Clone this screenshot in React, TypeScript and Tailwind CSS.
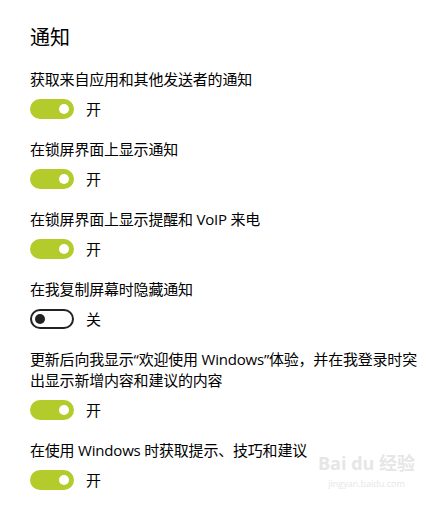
import React from "react";

const items = [
  { label: "获取来自应用和其他发送者的通知", on: true },
  { label: "在锁屏界面上显示通知", on: true },
  { label: "在锁屏界面上显示提醒和 VoIP 来电", on: true },
  { label: "在我复制屏幕时隐藏通知", on: false },
  {
    label: "更新后向我显示“欢迎使用 Windows”体验，并在我登录时突出显示新增内容和建议的内容",
    on: true,
  },
  { label: "在使用 Windows 时获取提示、技巧和建议", on: true },
];

function Toggle({ on }: { on: boolean }) {
  if (on) {
    return (
      <div className="w-[44px] h-[20px] rounded-full bg-[#b4cb2c] flex items-center justify-end pr-[5px]">
        <div className="w-[10px] h-[10px] rounded-full bg-white" />
      </div>
    );
  }
  return (
    <div className="w-[44px] h-[20px] rounded-full border-2 border-[#222] flex items-center pl-[3px]">
      <div className="w-[10px] h-[10px] rounded-full bg-[#222]" />
    </div>
  );
}

export default function App() {
  return (
    <div
      className="w-[430px] h-[505px] bg-white text-black overflow-hidden relative"
      style={{ fontFamily: '"Open Sans", "Noto Sans CJK SC", sans-serif' }}
    >
      <div className="pl-[30px] pt-[24px]">
        <h1 className="text-[20px] leading-[28px] font-normal mb-[17px]">通知</h1>
        <div className="flex flex-col gap-[20px]">
          {items.map((it) => (
            <div key={it.label} className="flex flex-col gap-[9px]">
              <p className="text-[15px] leading-[21px] tracking-[-0.2px]">{it.label}</p>
              <div className="flex items-center gap-[12px] h-[20px]">
                <Toggle on={it.on} />
                <span className="text-[15px] leading-[20px]">{it.on ? "开" : "关"}</span>
              </div>
            </div>
          ))}
        </div>
      </div>
      <div className="absolute left-[318px] top-[452px] text-[#e6e6e6] text-center">
        <div className="text-[18px] leading-[22px] font-bold">Bai du 经验</div>
        <div className="text-[9px] leading-[12px] mt-[4px]">jingyan.baidu.com</div>
      </div>
    </div>
  );
}
